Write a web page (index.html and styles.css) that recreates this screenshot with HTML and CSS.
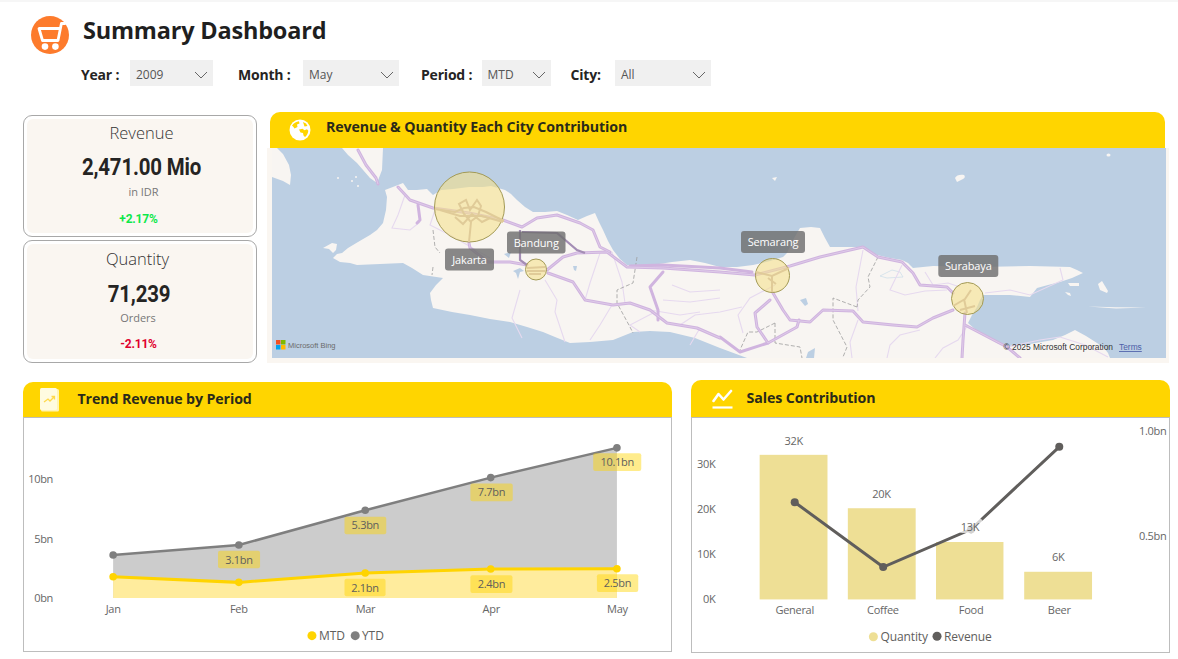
FILE: index.html
```html
<!DOCTYPE html>
<html lang="en">
<head>
<meta charset="utf-8">
<title>Summary Dashboard</title>
<link rel="stylesheet" href="styles.css">
</head>
<body>
<div class="page">
  <header class="title-row">
    <svg class="logo" viewBox="0 0 38 38" aria-hidden="true">
      <circle cx="19" cy="19" r="19" fill="#fd7b2c"/>
      <path d="M34 7.500h-3.600L27 24.500H11.500L8 12.500h21" fill="none" stroke="#fff" stroke-width="2.800" stroke-linejoin="round" stroke-linecap="round"/>
      <circle cx="14" cy="30.600" r="3.300" fill="#fff"/>
      <circle cx="24.400" cy="30.600" r="3.300" fill="#fff"/>
    </svg>
    <h1 class="title">Summary Dashboard</h1>
  </header>

  <div class="filters">
    <span class="f-label f-label-year">Year :</span>
    <div class="select select-year"><span>2009</span><svg class="chev" viewBox="0 0 14 8"><path d="M1 1l6 6 6-6"/></svg></div>
    <span class="f-label f-label-month">Month :</span>
    <div class="select select-month"><span>May</span><svg class="chev" viewBox="0 0 14 8"><path d="M1 1l6 6 6-6"/></svg></div>
    <span class="f-label f-label-period">Period :</span>
    <div class="select select-period"><span>MTD</span><svg class="chev" viewBox="0 0 14 8"><path d="M1 1l6 6 6-6"/></svg></div>
    <span class="f-label f-label-city">City:</span>
    <div class="select select-city"><span>All</span><svg class="chev" viewBox="0 0 14 8"><path d="M1 1l6 6 6-6"/></svg></div>
  </div>

  <section class="row-top">
    <div class="kpis">
      <div class="kpi">
        <div class="kpi-fill">
          <div class="kpi-name">Revenue</div>
          <div class="kpi-value">2,471.00 Mio</div>
          <div class="kpi-unit">in IDR</div>
          <div class="kpi-delta up">+2.17%</div>
        </div>
      </div>
      <div class="kpi">
        <div class="kpi-fill">
          <div class="kpi-name name-qty">Quantity</div>
          <div class="kpi-value value-qty">71,239</div>
          <div class="kpi-unit unit-qty">Orders</div>
          <div class="kpi-delta delta-qty down">-2.11%</div>
        </div>
      </div>
    </div>

    <div class="map-panel">
      <div class="bar bar-map">
        <svg class="ico-globe" viewBox="0 0 22 22" aria-hidden="true">
          <circle cx="11" cy="11" r="10.500" fill="#fff"/>
          <path d="M3 6.500C5 4 7.500 2.500 10 2.300L10.500 4.500 8 5.500 8.500 8 5.500 9.500 4.500 8z" fill="#ffd500"/>
          <path d="M10 10.500l3.500-.8 2 1.500 2.500-1 1.300 1.500c-.2 2.500-1.300 4.500-3.300 6.300l-1.500-1.500-.5-2.500-2.500-.5z" fill="#ffd500"/>
          <path d="M14 3l3 1.500 1.500 2.500-3 .5z" fill="#ffd500"/>
        </svg>
        <span class="bar-text">Revenue &amp; Quantity Each City Contribution</span>
      </div>
      <div class="map-frame">
        <svg class="map" viewBox="272 148 894 210" aria-label="Map of Java">
          <rect x="272" y="148" width="894" height="210" fill="#bccfe3"/>
          <g fill="#f8f5f2">
            <path d="M272 148H277L283 154 289 165 291 175 290 185 283 181 272 177Z"/>
            <path d="M342 148H383L382 170 377 183 370 178 357 163 348 155Z"/>
            <path d="M398 185L403 183 408 190 417 190 427 189 433 195 441 190 453 189 469 187 483 187 491 186 505 190 511 194 517 200 525 207 533 212 545 212 557 211 567 215 578 220 587 216 595 213 599 222 603 230 608 241 613 250 620 259 627 265 640 266 653 265 672 262 690 260 705 263 720 267 737 267 753 265 770 261 783 257 787 253 793 240 800 228 811 227 820 228 825 238 830 247 845 247 860 247 868 250 877 255 890 258 902 260 908 263 913 268 933 266 980 267 1030 266 1070 267 1077 270 1083 273 1072 278 1060 282 1048 285 1037 288 1030 297 1010 295 983 295 980 300 977 307 972 315 968 323 977 331 987 337 997 343 1007 347 1030 344 1053 340 1065 335 1075 330 1086 336 1097 343 1104 348 1108 353 1110 358H747L720 348 695 338 670 332 650 331 633 332 613 340 590 342 570 343 555 337 543 332 527 327 510 322 490 319 470 315 452 312 433 308 431 300 430 293 436 285 443 278 423 275 412 268 403 263 380 264 357 265 350 263 340 262 333 258 337 254 342 253 348 248 358 242 370 235 377 230 383 223 386 210 387 197 385 190Z"/>
            <path d="M323 248L332 243 337 244 336 250 333 253 329 249Z"/>
            <path d="M955 178C956 175 961 174 964 175 966 177 964 179 961 180L957 182Z"/>
            <ellipse cx="1108.500" cy="155" rx="2" ry="1.500"/>
            <path d="M772 178L777 177 775 181Z"/>
            <path d="M1098 284L1102 281 1108 291 1107 293 1100 290Z"/>
            <path d="M1068 283H1079V286H1070Z"/>
            <path d="M1065 292L1070 293 1071 296 1068 295Z"/>
            <path d="M1088 306.500L1116 307.200 1146 307.500 1116 308.500Z"/>
            <circle cx="352" cy="181" r="1"/><circle cx="356" cy="177" r="1"/><circle cx="358" cy="186" r="1"/><circle cx="338" cy="178" r="1"/>
          </g>
          <g fill="#bccfe3">
            <path d="M504 254L511 252 509 258Z"/>
            <path d="M513 271L520 268 524 271 520 272 518 279 516 273Z"/>
            <path d="M573 266L577 266 576 271 574 270Z"/>
            <path d="M800 300L806 298 808 304 805 306Z"/>
            <path d="M808 352L815 348 814 358H806Z"/>
            <path d="M633 336L640 334 642 338 635 339Z"/>
            <path d="M880 276L892 270 900 272 903 277 887 278Z" fill="none" stroke="#cfe0ea" stroke-width=".8"/>
          </g>
          <g fill="none" stroke="#e6d9ef" stroke-width="1.100">
            <path d="M405 195L398 215 392 228 410 230 420 222"/>
            <path d="M435 210L430 225 450 235 490 258"/>
            <path d="M520 290L512 318 522 338"/>
            <path d="M545 280L557 300 555 312 565 342"/>
            <path d="M600 253L590 283 585 300"/>
            <path d="M612 252L622 282 625 303"/>
            <path d="M655 312L630 325 640 332"/>
            <path d="M680 325L695 315 720 312 742 307"/>
            <path d="M720 290L690 292 672 285"/>
            <path d="M775 285L750 298 738 315 743 333"/>
            <path d="M863 250L856 287 858 311"/>
            <path d="M858 320L850 342 852 358"/>
            <path d="M902 265L890 290 905 295 925 291 947 290"/>
            <path d="M925 272L933 285 948 283 960 287"/>
            <path d="M1060 268L1063 280 1030 295 1010 290 985 293"/>
            <path d="M920 330L900 335 890 345 887 358"/>
            <path d="M968 325L958 340 943 348 935 358"/>
            <path d="M1060 337L1085 345 1108 357"/>
            <path d="M1007 347L1040 340 1060 337"/>
            <path d="M663 300L690 302 720 298"/>
            <path d="M650 310L680 315 700 312"/>
            <path d="M612 305L600 325 590 340"/>
            <path d="M700 328L690 345"/>
          </g>
          <g fill="none" stroke="#9d9d9d" stroke-width=".8" stroke-dasharray="4 2">
            <path d="M433 230L435 247 440 253"/>
            <path d="M433 267L432 275"/>
            <path d="M637 257L633 283 617 290 617 303 630 327 633 333"/>
            <path d="M878 257L868 277 870 287 858 300 857 307"/>
            <path d="M857 307L833 298 833 320 847 347 843 357"/>
            <path d="M775 323L757 332H748L740 350"/>
            <path d="M775 323V343L800 347 802 358"/>
          </g>
          <g class="road-case">
            <path d="M358 150L366 165 376 178 378 184"/>
            <path d="M398 187L410 200 433 208 469 213 503 220 522 227 537 218 557 215 580 223 593 230 600 247 610 252"/>
            <path d="M418 205L420 220 417 223"/>
            <path d="M469 243L470 248 488 262 510 262 527 265"/>
            <path d="M547 270L563 257 577 253 607 252 627 267 663 268 720 272 755 275 790 266 820 257 863 247 878 257 902 262 913 273 920 285 947 287 953 293"/>
            <path d="M630 266L663 265 720 268 752 272"/>
            <path d="M548 273L573 282 585 300 613 305 630 303 650 310 667 323 697 328 720 338"/>
            <path d="M663 272L650 287 658 310 658 320"/>
            <path d="M773 293L783 310 790 320 810 322 823 310 853 311 863 322 893 325 917 327 933 318 953 310"/>
            <path d="M770 300L755 313 757 327 768 343 797 327 799 320"/>
            <path d="M768 343L740 352 720 337"/>
            <path d="M965 313L963 340 962 358"/>
            <path d="M965 325L1007 347 1020 358"/>
          </g>
          <g class="road-line">
            <path d="M358 150L366 165 376 178 378 184"/>
            <path d="M398 187L410 200 433 208 469 213 503 220 522 227 537 218 557 215 580 223 593 230 600 247 610 252"/>
            <path d="M469 243L470 248 488 262 510 262 527 265"/>
            <path d="M547 270L563 257 577 253 607 252 627 267 663 268 720 272 755 275 790 266 820 257 863 247 878 257 902 262 913 273 920 285 947 287 953 293"/>
            <path d="M548 273L573 282 585 300 613 305 630 303 650 310 667 323 697 328 720 338"/>
            <path d="M773 293L783 310 790 320 810 322 823 310 853 311 863 322 893 325 917 327 933 318 953 310"/>
            <path d="M770 300L755 313 757 327 768 343 797 327 799 320"/>
            <path d="M965 313L963 340 962 358"/>
            <path d="M965 325L1007 347 1020 358"/>
          </g>
          <path d="M520 230V260L527 265M522 232L557 233 577 250 585 253" fill="none" stroke="#a48db5" stroke-width="2.200"/>
          <g class="bubble">
            <circle cx="469.500" cy="207" r="35"/>
            <circle cx="536" cy="269.500" r="10.500"/>
            <circle cx="772.500" cy="275.500" r="17"/>
            <circle cx="967.500" cy="298.500" r="16"/>
          </g>
          <g class="bubble-road">
            <path d="M435 209L455 212 464 208 474 207 486 212 504 221"/>
            <path d="M440 210L460 216 482 216 503 222"/>
            <path d="M469 242L471 222 464 214 459 204 466 200 470 210 477 200 481 206 478 216 470 222"/>
            <path d="M455 217L463 224 472 214 482 222 490 218"/>
            <path d="M527 268L545 267M527 271L545 271M529 274L541 274"/>
            <path d="M756 272L772 276 789 268M772 276L772 292M768 278L776 284"/>
            <path d="M953 306L965 299 971 290M964 299L967 313M960 310L975 306"/>
          </g>
          <g class="pin">
            <rect x="445" y="248.500" width="49" height="22" rx="3"/>
            <text x="469.500" y="263.800">Jakarta</text>
            <rect x="507" y="231.500" width="58.500" height="22" rx="3"/>
            <text x="536.200" y="246.800">Bandung</text>
            <rect x="741" y="231" width="64" height="22" rx="3"/>
            <text x="773" y="246.300">Semarang</text>
            <rect x="938.300" y="255" width="60" height="22" rx="3"/>
            <text x="968.300" y="270.300">Surabaya</text>
          </g>
          <rect x="276" y="340" width="4.500" height="4.500" fill="#f25022"/>
          <rect x="281" y="340" width="4.500" height="4.500" fill="#7fba00"/>
          <rect x="276" y="345" width="4.500" height="4.500" fill="#00a4ef"/>
          <rect x="281" y="345" width="4.500" height="4.500" fill="#ffb900"/>
          <text class="bing" x="288" y="347.500">Microsoft Bing</text>
          <text class="copy" x="1003.500" y="350">© 2025 Microsoft Corporation</text>
          <text class="terms" x="1119" y="350">Terms</text>
        </svg>
      </div>
    </div>
  </section>

  <section class="row-bottom">
    <div class="panel panel-trend">
      <div class="bar bar-trend">
        <svg class="ico-doc" viewBox="0 0 20 24" aria-hidden="true">
          <rect x="1" y="1" width="18" height="22.500" rx="1.500" fill="#fff4b3"/>
          <rect x="0" y="0" width="17" height="22" rx="1.500" fill="#fffbe0"/>
          <path d="M4 14l4-3 2 2 4-4M11.500 8.500H14.500V11.500" fill="none" stroke="#ffd94a" stroke-width="1.300"/>
        </svg>
        <span class="bar-text">Trend Revenue by Period</span>
      </div>
      <div class="chart-box chart-trend">
        <svg class="chart" viewBox="24 418.500 646 232">
          <path d="M113 555L238.500 545 364.700 510.300 490 477.700 616 448V598H113Z" fill="#cccccc"/>
          <path d="M113 576.700L238.500 582.300 364.700 573 490 569 616 568.700V598H113Z" fill="#ffec9d"/>
          <path d="M113 555L238.500 545 364.700 510.300 490 477.700 616 448" fill="none" stroke="#7f7f7f" stroke-width="2.500"/>
          <path d="M113 576.700L238.500 582.300 364.700 573 490 569 616 568.700" fill="none" stroke="#ffd400" stroke-width="3"/>
          <g fill="#7f7f7f">
            <circle cx="113" cy="555" r="3.800"/><circle cx="238.500" cy="545" r="3.800"/><circle cx="364.700" cy="510.300" r="3.800"/><circle cx="490" cy="477.700" r="3.800"/><circle cx="616" cy="448" r="3.800"/>
          </g>
          <g fill="#ffd400">
            <circle cx="113" cy="576.700" r="3.800"/><circle cx="238.500" cy="582.300" r="3.800"/><circle cx="364.700" cy="573" r="3.800"/><circle cx="490" cy="569" r="3.800"/><circle cx="616" cy="568.700" r="3.800"/>
          </g>
          <g class="tag">
            <rect x="217.700" y="550.700" width="42" height="17.500" rx="2"/>
            <rect x="344" y="516.700" width="41.700" height="17.500" rx="2"/>
            <rect x="469.700" y="483.700" width="42.300" height="17.500" rx="2"/>
            <rect x="592.300" y="453.300" width="48" height="17.700" rx="2"/>
            <rect x="344" y="578.700" width="41" height="17.500" rx="2"/>
            <rect x="469.700" y="575.300" width="42" height="17.500" rx="2"/>
            <rect x="596" y="574.300" width="41.300" height="17.700" rx="2"/>
          </g>
          <g class="lbl mid dark">
            <text x="238.700" y="563.500">3.1bn</text>
            <text x="364.800" y="529.500">5.3bn</text>
            <text x="490.800" y="496.500">7.7bn</text>
            <text x="616.300" y="466.300">10.1bn</text>
            <text x="364.500" y="591.500">2.1bn</text>
            <text x="490.700" y="588">2.4bn</text>
            <text x="616.600" y="587">2.5bn</text>
          </g>
          <g class="lbl end">
            <text x="53" y="483">10bn</text>
            <text x="53" y="543">5bn</text>
            <text x="53" y="602">0bn</text>
          </g>
          <g class="lbl mid">
            <text x="113" y="613">Jan</text>
            <text x="238.500" y="613">Feb</text>
            <text x="365" y="613">Mar</text>
            <text x="490.500" y="613">Apr</text>
            <text x="616.500" y="613">May</text>
          </g>
          <circle cx="311.500" cy="635.500" r="4.500" fill="#ffd400"/>
          <text class="legend" x="318.500" y="640">MTD</text>
          <circle cx="354.700" cy="635.500" r="4.500" fill="#7f7f7f"/>
          <text class="legend" x="361.500" y="640">YTD</text>
        </svg>
      </div>
    </div>

    <div class="panel panel-sales">
      <div class="bar bar-sales">
        <svg class="ico-line" viewBox="0 0 22 20" aria-hidden="true">
          <path d="M1.500 12L6.500 5 11.500 10.500 19 2" fill="none" stroke="#fff" stroke-width="2.600" stroke-linecap="round" stroke-linejoin="round"/>
          <path d="M0.500 18.500H20.500" stroke="#fff" stroke-width="2.200"/>
        </svg>
        <span class="bar-text">Sales Contribution</span>
      </div>
      <div class="chart-box chart-sales">
        <svg class="chart" viewBox="692.500 418.500 476 233">
          <g fill="#eedf95">
            <rect x="760" y="455" width="67.700" height="144.300"/>
            <rect x="848" y="508.300" width="67.700" height="91"/>
            <rect x="936" y="542" width="67.300" height="57.300"/>
            <rect x="1024" y="571.700" width="67.700" height="27.600"/>
          </g>
          <path d="M795 502.300L883.300 567 971 529.300 1059 447" fill="none" stroke="#605e5c" stroke-width="3"/>
          <g fill="#605e5c">
            <circle cx="795" cy="502.300" r="4"/><circle cx="883.300" cy="567" r="4"/><circle cx="971" cy="529.300" r="4"/><circle cx="1059" cy="447" r="4"/>
          </g>
          <rect x="957" y="518" width="26" height="15" rx="5" fill="#fff" fill-opacity=".72"/>
          <g class="lbl mid">
            <text x="794" y="445">32K</text>
            <text x="881.700" y="498">20K</text>
            <text x="970" y="531">13K</text>
            <text x="1058" y="561">6K</text>
            <text x="795" y="614">General</text>
            <text x="883" y="614">Coffee</text>
            <text x="971" y="614">Food</text>
            <text x="1059" y="614">Beer</text>
          </g>
          <g class="lbl end">
            <text x="716" y="468">30K</text>
            <text x="716" y="513">20K</text>
            <text x="716" y="558">10K</text>
            <text x="716" y="603">0K</text>
            <text x="1166" y="435">1.0bn</text>
            <text x="1166" y="540">0.5bn</text>
          </g>
          <circle cx="873.500" cy="636.500" r="4.500" fill="#eedf95"/>
          <text class="legend" x="880.500" y="641">Quantity</text>
          <circle cx="937" cy="636" r="4.500" fill="#605e5c"/>
          <text class="legend" x="944" y="641">Revenue</text>
        </svg>
      </div>
    </div>
  </section>
</div>
</body>
</html>
```
FILE: styles.css
```css
* { box-sizing: border-box; }
html, body { margin: 0; padding: 0; background: #fff; }
body { font-family: "Open Sans", "Noto Sans", sans-serif; color: #252423; }
.page { width: 1178px; height: 659px; overflow: hidden; border-top: 2px solid #f6f6f6; }

.title-row { display: flex; align-items: flex-start; height: 38px; margin: 14px 0 0 31px; gap: 14px; }
.logo { width: 38px; height: 38px; flex: none; }
.title { margin: -1px 0 0; font-size: 23.500px; line-height: 30px; font-weight: 700; color: #1f1f1f; letter-spacing: -.2px; }

.filters { display: flex; align-items: center; height: 26px; margin: 6px 0 0 81px; }
.f-label { font-size: 14px; font-weight: 700; color: #252423; white-space: nowrap; letter-spacing: -.2px; margin-top: 2px; }
.f-label-year { width: 49px; }
.f-label-month { width: 65px; margin-left: 25px; }
.f-label-period { width: 60.500px; margin-left: 22px; }
.f-label-city { width: 44.500px; margin-left: 19.500px; }
.select { height: 26px; background: #f0f0f0; display: flex; align-items: center; justify-content: space-between; padding: 3px 5px 0 6px; font-size: 12px; color: #555; }
.select-year { width: 83px; }
.select-month { width: 96px; }
.select-period { width: 69.500px; }
.select-city { width: 96px; }
.chev { width: 14px; height: 8px; fill: none; stroke: #666; stroke-width: 1; }

.row-top { display: flex; margin: 26px 0 0 22.500px; height: 251px; }
.kpis { width: 234px; display: flex; flex-direction: column; gap: 3px; padding-top: 2.500px; flex: none; }
.kpi { height: 123px; border: 1px solid #a8a8a8; border-radius: 9px; background: #fff; padding: 3px; }
.kpi-fill { height: 100%; background: #faf6f1; border-radius: 6px; display: flex; flex-direction: column; align-items: center; }
.kpi-name { font-size: 16.500px; line-height: 22px; margin: 3px 0 0 4px; font-weight: 300; color: #333; }
.kpi-value { font-family: Roboto, "Liberation Sans", sans-serif; font-size: 23.500px; font-weight: 700; line-height: 26px; margin: 10px 0 0 4px; color: #252423; letter-spacing: -.2px; transform: scaleX(.87); }
.kpi-unit { font-size: 11px; line-height: 14px; margin: 5px 0 0 8px; color: #777; }
.kpi-delta { font-family: Roboto, "Liberation Sans", sans-serif; font-size: 12px; font-weight: 700; line-height: 14px; margin: 13px 0 0 -2px; letter-spacing: -.2px; }
.name-qty { margin: 4px 0 0 -4px; }
.value-qty { margin: 11px 0 0 -2px; }
.unit-qty { margin: 4px 0 0 -3px; }
.delta-qty { margin-top: 12px; }
.up { color: #0ee84a; }
.down { color: #e0002d; }

.map-panel { margin-left: 10.500px; width: 902px; flex: none; }
.bar { background: #ffd500; border-radius: 10px 10px 0 0; display: flex; align-items: center; }
.bar-text { font-size: 14.200px; font-weight: 700; color: #2a2a1a; white-space: nowrap; letter-spacing: -.1px; margin-top: -2px; }
.bar-map { height: 36px; margin: 0 4px 0 3px; padding-left: 18.500px; }
.bar-map .bar-text { margin-top: -8px; }
.ico-globe { width: 22px; height: 22px; flex: none; margin-right: 15.500px; }
.map-frame { background: #faf6f1; height: 215px; padding: 0 3px 5px 5px; }
.map { display: block; width: 894px; height: 210px; }
.road-case path { fill: none; stroke: #d0b4df; stroke-width: 3; stroke-linejoin: round; stroke-linecap: round; }
.road-line path { fill: none; stroke: #e4d4ec; stroke-width: .7; stroke-linejoin: round; }
.bubble circle { fill: #f4e08a; fill-opacity: .58; stroke: #a39a55; stroke-width: 1; }
.bubble-road path { fill: none; stroke: #e0cb98; stroke-width: 2; }
.pin rect { fill: #6f6f6f; fill-opacity: .82; }
.pin text { fill: #fff; font-size: 11px; text-anchor: middle; letter-spacing: -.15px; }
.bing { font-family: "Liberation Sans", sans-serif; font-size: 7.500px; fill: #6b6b6b; }
.copy { font-family: "Liberation Sans", sans-serif; font-size: 8.400px; fill: #333; }
.terms { font-family: "Liberation Sans", sans-serif; font-size: 8.400px; fill: #4d5fa8; text-decoration: underline; }

.row-bottom { display: flex; margin: 17px 0 0 22.500px; gap: 19.500px; align-items: flex-start; }
.panel { flex: none; }
.panel-trend { width: 649px; margin-top: 1.500px; }
.panel-sales { width: 479px; }
.bar-trend { height: 35.500px; padding-left: 17px; }
.bar-sales { height: 37px; padding-left: 20.500px; }
.ico-doc { width: 20px; height: 24px; flex: none; margin: 1px 18px 0 0; }
.ico-line { width: 22px; height: 20px; flex: none; margin-right: 13px; }
.chart-box { border: 1.500px solid #bdbdbd; background: #fff; }
.chart-trend { height: 235px; }
.chart-sales { height: 236px; }
.chart { display: block; width: 100%; height: 100%; }
.lbl text { font-size: 11px; fill: #666; letter-spacing: -.3px; }
.lbl.mid text { text-anchor: middle; }
.lbl.end text { text-anchor: end; }
.lbl.dark text { fill: #605e5c; }
.tag rect { fill: #ffd400; fill-opacity: .45; }
.legend { font-size: 12px; fill: #605e5c; letter-spacing: -.1px; }
```
